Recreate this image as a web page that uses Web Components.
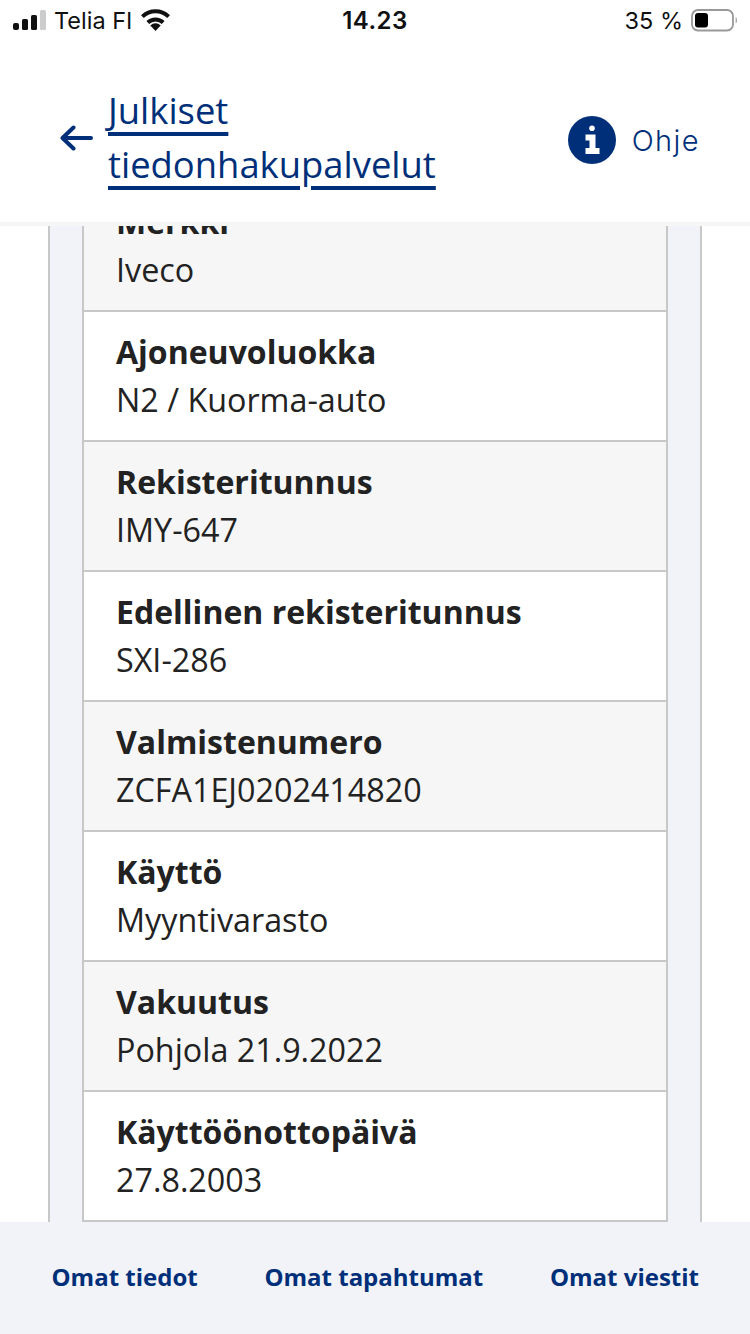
<!DOCTYPE html>
<html lang="fi">
<head>
<meta charset="utf-8">
<title>Julkiset tiedonhakupalvelut</title>
<style>
    html, body { margin: 0; padding: 0; background: #fff; }
    body { width: 750px; height: 1334px; overflow: hidden; display: flex; flex-direction: column; font-family: "Open Sans", sans-serif; }
</style>
</head>
<body>
<status-bar></status-bar>
<app-header></app-header>
<vehicle-panel>
    <data-row label="Merkki" value="Iveco" shaded></data-row>
    <data-row label="Ajoneuvoluokka" value="N2 / Kuorma-auto"></data-row>
    <data-row label="Rekisteritunnus" value="IMY-647" shaded></data-row>
    <data-row label="Edellinen rekisteritunnus" value="SXI-286"></data-row>
    <data-row label="Valmistenumero" value="ZCFA1EJ0202414820" shaded></data-row>
    <data-row label="Käyttö" value="Myyntivarasto"></data-row>
    <data-row label="Vakuutus" value="Pohjola 21.9.2022" shaded></data-row>
    <data-row label="Käyttöönottopäivä" value="27.8.2003"></data-row>
</vehicle-panel>
<bottom-nav>
    <a>Omat tiedot</a>
    <a>Omat tapahtumat</a>
    <a>Omat viestit</a>
</bottom-nav>

<script>
    class StatusBar extends HTMLElement {
        constructor() {
            super();
            this.attachShadow({mode: 'open'}).innerHTML = `
                <style>
                    :host { display: grid; grid-template-columns: 1fr auto 1fr; align-items: center; height: 40px; padding: 0 13px; box-sizing: border-box; font: 400 23.5px Inter, "Liberation Sans", sans-serif; color: #111; flex: none; }
                    .left, .right { display: flex; align-items: center; }
                    .left { gap: 8px; }
                    .right { justify-content: flex-end; gap: 8px; }
                    .time { font-weight: 600; font-size: 24px; letter-spacing: .5px; }
                    svg { display: block; }
                </style>
                <div class="left">
                    <svg width="33" height="22" viewBox="0 0 33 22">
                        <rect x="0" y="14" width="6" height="7" rx="2" fill="#111"/>
                        <rect x="9" y="10" width="6" height="11" rx="1.5" fill="#111"/>
                        <rect x="18" y="6" width="6" height="15" rx="1.5" fill="#111"/>
                        <rect x="27" y="1" width="6" height="20" rx="1.5" fill="#ccc"/>
                    </svg>
                    <span>Telia FI</span>
                    <svg width="31" height="22" viewBox="0 0 31 22">
                        <path d="M15.5 22l-5.2-5.6a7.6 7.6 0 0 1 10.4 0z" fill="#111"/>
                        <path d="M7.8 13.5A11.2 11.2 0 0 1 23.2 13.5" fill="none" stroke="#111" stroke-width="4"/>
                        <path d="M2.4 7.6A19 19 0 0 1 28.6 7.6" fill="none" stroke="#111" stroke-width="4"/>
                    </svg>
                </div>
                <div class="time">14.23</div>
                <div class="right">
                    <span>35 %</span>
                    <svg width="46" height="23" viewBox="0 0 46 23">
                        <rect x="1" y="1" width="41" height="20.5" rx="6" fill="#fff" stroke="#999" stroke-width="1.8"/>
                        <rect x="4" y="4" width="13" height="14.5" rx="3" fill="#000"/>
                        <path d="M44.6 8v6.5a4 4 0 0 0 0-6.5z" fill="#aaa"/>
                    </svg>
                </div>
            `;
        }
    }

    class AppHeader extends HTMLElement {
        constructor() {
            super();
            this.attachShadow({mode: 'open'}).innerHTML = `
                <style>
                    :host { display: flex; align-items: center; height: 186px; padding: 0 50px 0 60px; box-sizing: border-box; background: #fff; border-bottom: 4px solid #f6f6f7; color: #002f7a; flex: none; }
                    .arrow { flex: none; margin: 14px 15px 0 0; }
                    .title { flex: 1; font-size: 36.4px; line-height: 54px; margin-top: 12px; }
                    .title a { color: inherit; text-decoration: underline; text-decoration-thickness: 4px; text-underline-offset: 8px; }
                    .help { display: flex; align-items: center; gap: 16px; font: 300 29px Inter, sans-serif; letter-spacing: 1.4px; margin-top: 18px; }
                    svg { display: block; }
                </style>
                <svg class="arrow" width="33" height="26" viewBox="0 0 33 26">
                    <path d="M31 13H3M13.5 2.5L2.5 13l11 10.5" fill="none" stroke="#002f7a" stroke-width="4" stroke-linecap="round" stroke-linejoin="round"/>
                </svg>
                <div class="title"><a>Julkiset<br>tiedonhakupalvelut</a></div>
                <div class="help">
                    <svg width="48" height="48" viewBox="0 0 48 48">
                        <circle cx="24" cy="24" r="24" fill="#002f7a"/>
                        <circle cx="24" cy="12.3" r="2.8" fill="#fff"/>
                        <path d="M17.5 18.5h10v13.5h4v6h-14v-6h4v-7.5h-4z" fill="#fff"/>
                    </svg>
                    <span>Ohje</span>
                </div>
            `;
        }
    }

    class VehiclePanel extends HTMLElement {
        constructor() {
            super();
            this.attachShadow({mode: 'open'}).innerHTML = `
                <style>
                    :host { display: flex; flex: 1; min-height: 0; overflow: hidden; background: #fff; }
                    .outer { flex: 1; min-width: 0; overflow: hidden; margin: 0 48px; background: #f1f3f8; border: solid #c8c8c8; border-width: 0 2px; padding: 0 32px; }
                    .table { margin-top: -44px; border: solid #c8c8c8; border-width: 0 2px; }
                </style>
                <div class="outer"><div class="table"><slot></slot></div></div>
            `;
        }
    }

    class DataRow extends HTMLElement {
        constructor() {
            super();
            this.attachShadow({mode: 'open'}).innerHTML = `
                <style>
                    :host { display: block; height: 130px; box-sizing: border-box; padding: 16px 32px 0; background: #fff; border-bottom: 2px solid #c8c8c8; color: #222; }
                    :host([shaded]) { background: #f6f6f6; }
                    .label { font-size: 32px; font-weight: 700; line-height: 48px; }
                    .value { font-size: 32.3px; line-height: 46px; }
                </style>
                <div class="label"></div>
                <div class="value"></div>
            `;
        }

        connectedCallback() {
            this.shadowRoot.querySelector('.label').textContent = this.getAttribute('label');
            this.shadowRoot.querySelector('.value').textContent = this.getAttribute('value');
        }
    }

    class BottomNav extends HTMLElement {
        constructor() {
            super();
            this.attachShadow({mode: 'open'}).innerHTML = `
                <style>
                    :host { display: flex; justify-content: space-between; align-items: center; height: 112px; padding: 0 51px 3px 51.5px; box-sizing: border-box; background: #f1f3f8; color: #002f7a; font-size: 24px; font-weight: 700; flex: none; }
                </style>
                <slot></slot>
            `;
        }
    }

    customElements.define('status-bar', StatusBar);
    customElements.define('app-header', AppHeader);
    customElements.define('vehicle-panel', VehiclePanel);
    customElements.define('data-row', DataRow);
    customElements.define('bottom-nav', BottomNav);
</script>
</body>
</html>
